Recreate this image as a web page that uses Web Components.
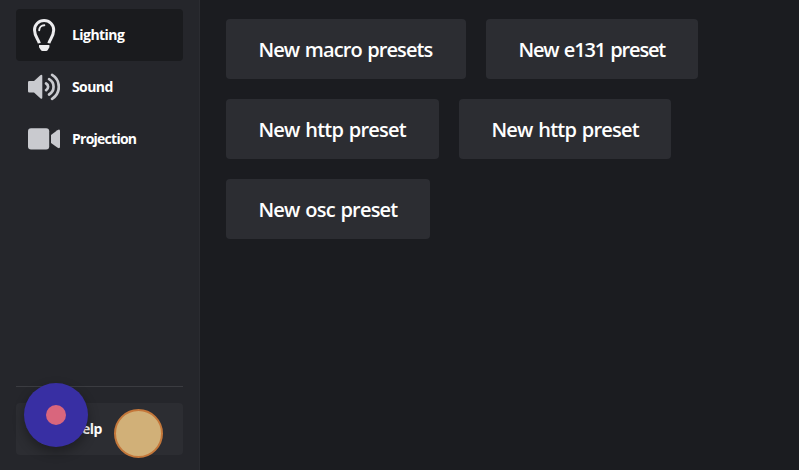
<!DOCTYPE html>
<html lang="en"><head><meta charset="utf-8"><title>Presets</title>
<style>html,body{margin:0;height:100%;overflow:hidden;background:#1b1c20}body{font-family:"Open Sans","Noto Sans",sans-serif;color:#fff}</style></head>
<body>
<app-shell>
<side-nav slot="nav">
<nav-item active style="--ls:-.55px"><svg slot="icon" viewBox="0 0 32 32" width="32" height="32"><path d="M11.3 24.3C10.6 20.6 6.5 17.3 6.5 11.1a9.6 9.6 0 0 1 19.2 0c0 6.2-4.1 9.5-4.8 13.2" fill="none" stroke="currentColor" stroke-width="3"/><path d="M11.2 11.3a5.1 5.1 0 0 1 5.1-5" fill="none" stroke="currentColor" stroke-width="2" stroke-linecap="round"/><path d="M11 26h10.4v2.2l-1.6 2.8q-.6 1-1.7 1h-3.6q-1.1 0-1.7-1L11 28.2z" fill="currentColor"/></svg>Lighting</nav-item>
<nav-item style="--ls:-.6px"><svg slot="icon" viewBox="0 0 32 32" width="32" height="32"><path d="M1.3 10H6l6.3-5.7Q14.3 3 14.3 5v21.6q0 2-2 .7L6 21.6H1.3Q0 21.6 0 20.3v-9Q0 10 1.3 10z" fill="currentColor"/><g fill="none" stroke="currentColor" stroke-width="2.7" stroke-linecap="round"><path d="M18.1 12.5a3.8 3.8 0 0 1 0 6.7M21.1 8.2a8.8 8.8 0 0 1 0 15.3M24.1 3.9a14 14 0 0 1 0 23.9"/></g></svg>Sound</nav-item>
<nav-item style="--ls:-.75px"><svg slot="icon" viewBox="0 0 32 32" width="32" height="32"><rect y="5.2" width="21.2" height="21.4" rx="3" fill="currentColor"/><path d="m23 12 6.3-4.7Q32 5.5 32 8.1v15.7q0 2.5-2.7.8L23 20z" fill="currentColor"/></svg>Projection</nav-item>
<nav-item slot="footer" boxed style="--ls:-.6px"><svg slot="icon" viewBox="0 0 32 32" width="32" height="32"><path d="M10 9a6 6 0 1 1 8 6q-2 1-2 5" fill="none" stroke="currentColor" stroke-width="3"/><circle cx="15.2" cy="28.7" r="2" fill="currentColor"/></svg>Help</nav-item>
</side-nav>
<preset-list>
<preset-button style="--w:240px;--ls:-.92px">New macro presets</preset-button>
<preset-button style="--w:212px;--ls:-1.17px">New e131 preset</preset-button>
<preset-button style="--w:213px;--ls:-.8px">New http preset</preset-button>
<preset-button style="--w:212px;--ls:-.8px">New http preset</preset-button>
<preset-button style="--w:204px;--ls:-.8px">New osc preset</preset-button>
</preset-list>
</app-shell>
<record-button></record-button><touch-pointer></touch-pointer>
<script>
const define=(name,html)=>customElements.define(name,class extends HTMLElement{
constructor(){super();this.attachShadow({mode:'open'}).innerHTML=html;}});
define('app-shell',`<style>:host{display:flex;height:100vh}main{flex:1;min-width:0}</style><slot name="nav"></slot><main><slot></slot></main>`);
define('side-nav',`<style>:host{display:flex;flex-direction:column;box-sizing:border-box;width:200px;padding:9px 16px 15px;background:#25262b;border-right:1px solid #2b2c31}nav{flex:1}footer{border-top:1px solid #3b3c41;padding-top:16px}</style><nav><slot></slot></nav><footer><slot name="footer"></slot></footer>`);
define('nav-item',`<style>:host{display:flex;align-items:center;gap:12px;height:52px;box-sizing:border-box;padding:0 12px;border-radius:4px;font-size:14px;font-weight:700;letter-spacing:var(--ls);color:#fff}:host([active]){background:#1a1b1e}:host([boxed]){background:#2c2d32}.icon{display:block;width:32px;height:32px;color:#c9cacf}:host([active]) .icon{color:#ececee}.label{padding-bottom:1px}</style><span class="icon"><slot name="icon"></slot></span><span class="label"><slot></slot></span>`);
define('preset-list',`<style>:host{display:flex;flex-wrap:wrap;gap:20px;padding:19px 26px}</style><slot></slot>`);
define('preset-button',`<style>:host{display:flex;align-items:center;box-sizing:border-box;width:var(--w);height:60px;padding:2px 0 0 32.5px;border-radius:4px;background:#2c2d32;color:#fff;font-size:20px;font-weight:600;letter-spacing:var(--ls);word-spacing:1.3px;line-height:28px;white-space:nowrap}</style><span><slot></slot></span>`);
define('record-button',`<style>:host{position:absolute;left:24px;top:383px;width:64px;height:64px;border-radius:50%;background:#382fa3;display:grid;place-items:center;box-shadow:0 5px 12px #0005}i{width:20px;height:20px;border-radius:50%;background:#d9667d}</style><i></i>`);
define('touch-pointer',`<style>:host{position:absolute;box-sizing:border-box;left:114px;top:409px;width:49px;height:49px;border-radius:50%;background:#d1b078;border:2px solid #c4773a}</style>`);
</script></body></html>
